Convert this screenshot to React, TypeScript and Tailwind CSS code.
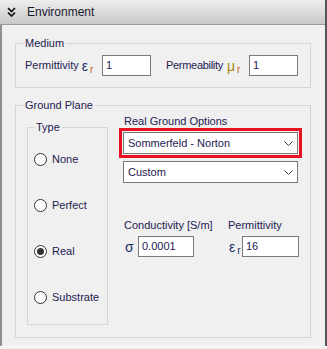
const ink = 'text-[#1e2050]'

function Chevron() {
  return (
    <svg width="9" height="5" viewBox="0 0 9 5" className="shrink-0">
      <path d="M0.5 0.5 L4.5 4.5 L8.5 0.5" fill="none" stroke="#3a3a3a" strokeWidth="1" />
    </svg>
  )
}

function Select({ value }: { value: string }) {
  return (
    <div className="flex h-[22px] w-[175px] items-center justify-between border border-[#7a7a7a] bg-white pl-[4px] pr-[4px]">
      <span className={ink}>{value}</span>
      <Chevron />
    </div>
  )
}

function TextBox({ value, w }: { value: string; w: string }) {
  return (
    <div className={`flex h-[21px] shrink-0 items-center border border-[#7a7a7a] bg-white pl-[3px] ${w}`}>
      <span className={ink}>{value}</span>
    </div>
  )
}

function Radio({ label, checked }: { label: string; checked?: boolean }) {
  return (
    <div className="flex h-[13px] items-center">
      <div className="ml-[6px] flex h-[13px] w-[13px] items-center justify-center rounded-full border border-[#333333] bg-white">
        {checked && <div className="h-[7px] w-[7px] rounded-full bg-[#333333]" />}
      </div>
      <span className={`ml-[5px] ${ink}`}>{label}</span>
    </div>
  )
}

function Sym({ ch, sub, chColor, subColor }: { ch: string; sub: string; chColor: string; subColor: string }) {
  return (
    <span className="flex h-[21px] items-center">
      <span className={`text-[14px] leading-none ${chColor}`}>{ch}</span>
      <span className={`mt-[8px] ml-[2px] text-[10px] leading-none ${subColor}`}>{sub}</span>
    </span>
  )
}

export default function App() {
  return (
    <div className="flex h-[349px] w-[327px] flex-col bg-[#f0f0f0] font-['Liberation_Sans',Arial,sans-serif] text-[11px] leading-[13px]">
      <div className="flex h-[346px] flex-col border-r-2 border-[#555555]">
        <div className="flex h-[25px] shrink-0 items-center border-b border-[#9a9a9a] bg-gradient-to-b from-[#eeeeee] to-[#c8c8c8] pl-[7px]">
          <svg width="9" height="10" viewBox="0 0 9 10">
            <path d="M1 1 L4.5 4.5 L8 1 M1 5.5 L4.5 9 L8 5.5" fill="none" stroke="#111111" strokeWidth="1.7" />
          </svg>
          <span className="ml-[11px] text-[12px] text-[#1a1a30]">Environment</span>
        </div>

        <div className="flex flex-1 flex-col border-l-2 border-[#8f8f8f]">
          <fieldset className="mt-[11px] ml-[13px] w-[296px] border border-[#d5d5d5]">
            <legend className={`ml-[7px] px-[2px] leading-[15px] ${ink}`}>Medium</legend>
            <div className="mt-[4px] mb-[11px] flex h-[21px] items-center pl-[9px]">
              <div className="flex w-[126px] items-center">
                <span className={`mr-[3px] ${ink}`}>Permittivity</span>
                <Sym ch="ε" sub="r" chColor="text-[#1f2f6a]" subColor="text-[#c8600a]" />
                <div className="ml-auto">
                  <TextBox value="1" w="w-[49px]" />
                </div>
              </div>
              <div className="ml-[15px] flex w-[132px] items-center">
                <span className={`mr-[4px] tracking-[-0.3px] ${ink}`}>Permeability</span>
                <Sym ch="μ" sub="r" chColor="text-[#a88a10]" subColor="text-[#c8600a]" />
                <div className="ml-auto">
                  <TextBox value="1" w="w-[49px]" />
                </div>
              </div>
            </div>
          </fieldset>

          <fieldset className="mt-[10px] ml-[13px] w-[296px] border border-[#d5d5d5]">
            <legend className={`ml-[7px] px-[2px] leading-[15px] ${ink}`}>Ground Plane</legend>
            <div className="flex items-start pb-[12px]">
              <fieldset className="mt-[7px] ml-[11px] h-[205px] w-[81px] border border-[#d5d5d5]">
                <legend className={`ml-[6px] px-[2px] leading-[15px] ${ink}`}>Type</legend>
                <div className="flex flex-col gap-[33px] pt-[18px]">
                  <Radio label="None" />
                  <Radio label="Perfect" />
                  <Radio label="Real" checked />
                  <Radio label="Substrate" />
                </div>
              </fieldset>

              <div className="ml-[11px] flex flex-col">
                <span className={`mt-[2px] ml-[5px] ${ink}`}>Real Ground Options</span>
                <div className="w-[183px] border-[3px] border-[#e81123] p-[1px]">
                  <Select value="Sommerfeld - Norton" />
                </div>
                <div className="mt-[3px] ml-[4px]">
                  <Select value="Custom" />
                </div>
                <div className="mt-[36px] ml-[5px] flex">
                  <div className="flex w-[104px] flex-col">
                    <span className={ink}>Conductivity [S/m]</span>
                    <div className="mt-[4px] flex items-center">
                      <span className="flex h-[21px] w-[14px] items-center pl-[1px] text-[14px] leading-none text-[#1f2f6a]">σ</span>
                      <TextBox value="0.0001" w="w-[56px]" />
                    </div>
                  </div>
                  <div className="flex flex-col">
                    <span className={ink}>Permittivity</span>
                    <div className="mt-[4px] flex items-center">
                      <span className="w-[14px] pl-[1px]">
                        <Sym ch="ε" sub="r" chColor="text-[#1f2f6a]" subColor="text-[#1f2f6a]" />
                      </span>
                      <TextBox value="16" w="w-[57px]" />
                    </div>
                  </div>
                </div>
              </div>
            </div>
          </fieldset>
        </div>
      </div>
      <div className="h-px bg-white" />
    </div>
  )
}
